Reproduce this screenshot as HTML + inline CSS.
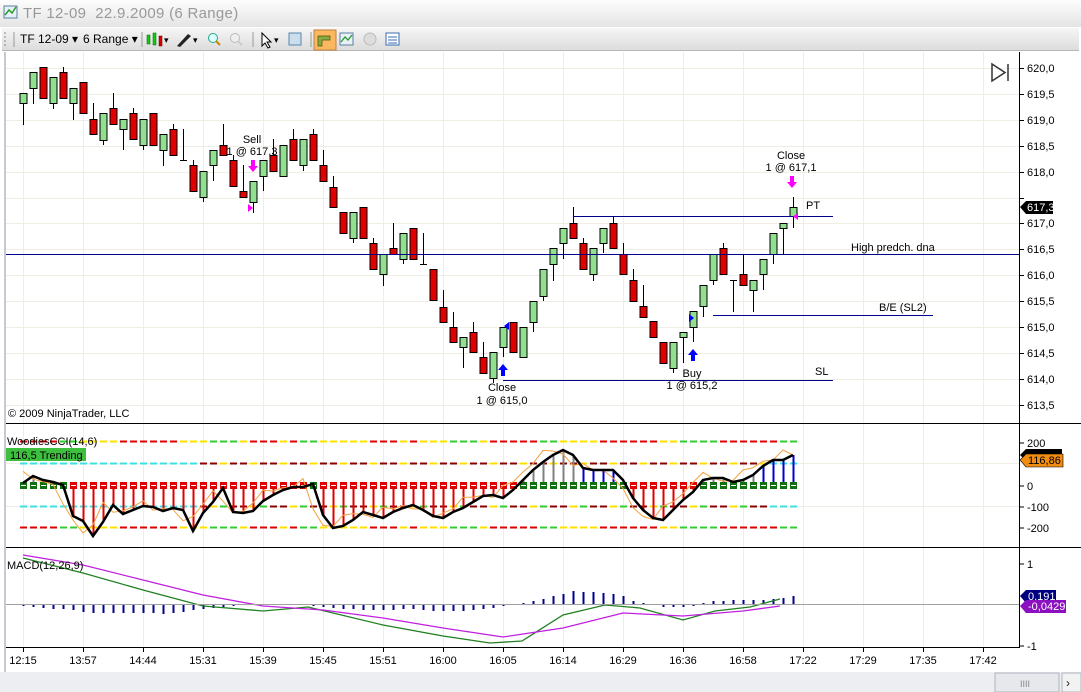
<!DOCTYPE html>
<html><head><meta charset="utf-8">
<style>
html,body{margin:0;padding:0;width:1081px;height:692px;overflow:hidden;background:#fff;font-family:"Liberation Sans",sans-serif;}
#title{position:absolute;left:0;top:0;width:1081px;height:27px;background:linear-gradient(#fdfdfd,#e4e4e4);}
#title span{position:absolute;left:23px;top:5px;font-size:15px;color:#999;letter-spacing:0.3px}
#tb{position:absolute;left:2px;top:28px;width:1077px;height:22px;background:linear-gradient(#f6f6f6,#dcdcdc);border-bottom:1px solid #b8b8b8;font-size:12px;color:#000}
#tb .t{position:absolute;top:4px}
svg{position:absolute;left:0;top:0}
</style></head><body>
<div id="title"><span>TF 12-09 &nbsp;22.9.2009 (6 Range)</span></div>
<div id="tb">
<span class="t" style="left:18px">TF 12-09 ▾</span>
<span class="t" style="left:81px">6 Range ▾</span>
</div>
<svg id="s" width="1081" height="692" xmlns="http://www.w3.org/2000/svg" font-family="Liberation Sans, sans-serif">
<rect x="4" y="6" width="13" height="12" fill="#e8f0f8" stroke="#5a7fa0"/>
<polyline points="5,15 9,10 12,13 16,7" fill="none" stroke="#2a9a2a" stroke-width="1.5"/>
<line x1="5" y1="32" x2="5" y2="47" stroke="#888" stroke-dasharray="2,2"/>
<line x1="14" y1="32" x2="14" y2="47" stroke="#999"/>
<line x1="142" y1="32" x2="142" y2="47" stroke="#999"/>
<rect x="147" y="35" width="3" height="9" fill="#1c1" stroke="#060" stroke-width=".5"/>
<rect x="153" y="33" width="3" height="12" fill="#1c1" stroke="#060" stroke-width=".5"/>
<rect x="159" y="36" width="3" height="10" fill="#d00" stroke="#600" stroke-width=".5"/>
<text x="164" y="43" font-size="9">▾</text>
<path d="M177 46 L188 34 L191 36 L180 47 Z" fill="#222"/>
<text x="193" y="43" font-size="9">▾</text>
<circle cx="213" cy="38" r="4.5" fill="#dff" stroke="#2a8"/><line x1="216" y1="41" x2="220" y2="45" stroke="#c80" stroke-width="2"/>
<circle cx="235" cy="38" r="4.5" fill="#eee" stroke="#bbb"/><line x1="238" y1="41" x2="242" y2="45" stroke="#ccc" stroke-width="2"/>
<line x1="253" y1="32" x2="253" y2="47" stroke="#999"/>
<path d="M262 33 L262 46 L265 43 L268 48 L270 47 L267 42 L271 42 Z" fill="#fff" stroke="#000"/>
<text x="274" y="43" font-size="9">▾</text>
<rect x="289" y="33" width="12" height="12" fill="#cde" stroke="#58a"/>
<line x1="311" y1="32" x2="311" y2="47" stroke="#999"/>
<rect x="314" y="30" width="22" height="20" fill="#fbb860" stroke="#c08040"/>
<path d="M318 36 h12 v4 h-8 v6 h-4z" fill="#8a4" stroke="#450" stroke-width=".7"/>
<rect x="340" y="33" width="13" height="12" fill="#e8f0f8" stroke="#5a7fa0"/>
<polyline points="341,42 345,37 348,40 352,35" fill="none" stroke="#2a9a2a" stroke-width="1.3"/>
<circle cx="370" cy="39" r="6" fill="#ddd" stroke="#bbb"/>
<rect x="386" y="33" width="13" height="12" fill="#fff" stroke="#3a6ab0"/>
<line x1="388" y1="37" x2="397" y2="37" stroke="#3a6ab0"/><line x1="388" y1="40" x2="397" y2="40" stroke="#3a6ab0"/><line x1="388" y1="43" x2="397" y2="43" stroke="#3a6ab0"/>
<rect x="0" y="52" width="1081" height="620" fill="#fff"/>
<line x1="5" y1="52" x2="5" y2="672" stroke="#c8c8d0" stroke-width="2"/>
<g id="grid" stroke="#eeeee4" stroke-width="1"></g>
<g id="main"></g>
<line x1="6" y1="423.5" x2="1081" y2="423.5" stroke="#000"/>
<line x1="6" y1="547.5" x2="1081" y2="547.5" stroke="#000"/>
<line x1="1019.5" y1="52" x2="1019.5" y2="647" stroke="#000"/>
<line x1="6" y1="647.5" x2="1020" y2="647.5" stroke="#000"/>
<path d="M992 64 L992 81 L1005 72.5 Z" fill="none" stroke="#333" stroke-width="1.5"/>
<line x1="1008" y1="64" x2="1008" y2="81" stroke="#333" stroke-width="1.5"/>
<line x1="6" y1="254.5" x2="1019" y2="254.5" stroke="#00008b"/>
<line x1="573" y1="216.5" x2="833" y2="216.5" stroke="#00008b"/>
<line x1="713" y1="315.5" x2="933" y2="315.5" stroke="#00008b"/>
<line x1="503" y1="380.5" x2="833" y2="380.5" stroke="#00008b"/>
<g font-size="11" fill="#000">
<text x="851" y="251">High predch. dna</text>
<text x="879" y="311">B/E (SL2)</text>
<text x="815" y="375">SL</text>
<text x="806" y="209">PT</text>
<text x="252" y="143" text-anchor="middle">Sell</text>
<text x="252" y="155" text-anchor="middle">1 @ 617,3</text>
<text x="791" y="159" text-anchor="middle">Close</text>
<text x="791" y="171" text-anchor="middle">1 @ 617,1</text>
<text x="502" y="391" text-anchor="middle">Close</text>
<text x="502" y="404" text-anchor="middle">1 @ 615,0</text>
<text x="692" y="377" text-anchor="middle">Buy</text>
<text x="692" y="389" text-anchor="middle">1 @ 615,2</text>
<text x="8" y="417">© 2009 NinjaTrader, LLC</text>
</g>
<g fill="#f0f">
<path d="M251 160 h4 v6 h3 l-5 6 l-5 -6 h3z"/><path d="M790 176 h4 v6 h3 l-5 6 l-5 -6 h3z"/>
<path d="M248 204 l5 4 l-5 4z"/><path d="M798 213 l-5 3.5 l5 3.5z"/>
</g>
<g fill="#00f">
<path d="M501 376 h4 v-6 h3 l-5 -6 l-5 6 h3z"/><path d="M691 361 h4 v-6 h3 l-5 -6 l-5 6 h3z"/>
<path d="M509 322 l-5 4 l5 4z"/><path d="M689 314 l5 4 l-5 4z"/>
</g>
<g id="pax" font-size="11"></g>
<path d="M1020 207 l6 -6 h27 v13 h-27z" fill="#000"/>
<text x="1027" y="211" font-size="11" fill="#fff">617,3</text>
<text x="7" y="445" font-size="11">WoodiesCCI(14,6)</text>
<rect x="6" y="448" width="80" height="13" fill="#3ec03e"/>
<text x="10" y="459" font-size="11">116,5 Trending</text>
<g font-size="11">
<line x1="1019" y1="443" x2="1024" y2="443" stroke="#000"/><text x="1027" y="447">200</text>
<line x1="1019" y1="486" x2="1024" y2="486" stroke="#000"/><text x="1027" y="490">0</text>
<line x1="1019" y1="507" x2="1024" y2="507" stroke="#000"/><text x="1027" y="511">-100</text>
<line x1="1019" y1="528" x2="1024" y2="528" stroke="#000"/><text x="1027" y="532">-200</text>
</g>
<path d="M1020 455 l6 -6 h36 v12 h-36z" fill="#000"/>
<path d="M1020 460 l6 -6 h37 v13 h-37z" fill="#f08c10" stroke="#000" stroke-width=".6"/>
<text x="1028" y="464" font-size="11">116,86</text>
<text x="7" y="569" font-size="11">MACD(12,26,9)</text>
<line x1="6" y1="604.5" x2="1019" y2="604.5" stroke="#a0a0a0"/>
<g font-size="11">
<line x1="1019" y1="564" x2="1024" y2="564" stroke="#000"/><text x="1027" y="568">1</text>
<line x1="1019" y1="646" x2="1024" y2="646" stroke="#000"/><text x="1027" y="650">-1</text>
</g>
<path d="M1020 596 l6 -6 h30 v13 h-30z" fill="#000080"/>
<text x="1028" y="600" font-size="11" fill="#fff">0,191</text>
<path d="M1020 606 l6 -6 h40 v13 h-40z" fill="#8a10c0"/>
<text x="1028" y="610" font-size="11" fill="#fff">-0,0429</text>
<g id="time" font-size="11"></g>
<rect x="0" y="672" width="1081" height="20" fill="#eceef2"/>
<rect x="995" y="673" width="64" height="19" fill="#e6e8ec" stroke="#b0b4bc"/>
<text x="1020" y="687" font-size="9" fill="#888">IIII</text>
<rect x="1062" y="673" width="19" height="19" fill="#f2f2f2" stroke="#b0b4bc"/>
<text x="1066" y="687" font-size="12" fill="#222">›</text>
</svg>
<script>
var NS="http://www.w3.org/2000/svg";
function el(p,t,a,txt){var e=document.createElementNS(NS,t);for(var k in a)e.setAttribute(k,a[k]);if(txt)e.textContent=txt;p.appendChild(e);return e;}
var grid=document.getElementById('grid'),main=document.getElementById('main'),pax=document.getElementById('pax'),tm=document.getElementById('time');
var xs=[23,83,143,203,263,323,383,443,503,563,623,683,743,803,863,923,983];
var tl=["12:15","13:57","14:44","15:31","15:39","15:45","15:51","16:00","16:05","16:14","16:29","16:36","16:58","17:22","17:29","17:35","17:42"];
xs.forEach(function(x,i){el(grid,'line',{x1:x+.5,y1:52,x2:x+.5,y2:647});
 el(tm,'line',{x1:x+.5,y1:647,x2:x+.5,y2:652,stroke:'#000'});
 el(tm,'text',{x:x,y:664,'text-anchor':'middle'},tl[i]);});
var pl=["620,0","619,5","619,0","618,5","618,0","617,5","617,0","616,5","616,0","615,5","615,0","614,5","614,0","613,5"];
for(var i=0;i<14;i++){var y=Math.round(68+i*25.9);el(grid,'line',{x1:6,y1:y+.5,x2:1019,y2:y+.5});
 el(pax,'line',{x1:1019,y1:y+.5,x2:1024,y2:y+.5,stroke:'#000'});
 if(i!=5)el(pax,'text',{x:1027,y:y+4},pl[i]);}
[463,506].forEach(function(y){el(grid,'line',{x1:6,y1:y+.5,x2:1019,y2:y+.5});});
var C=[[23,93,103,93,125,'g'],[33,72,88,72,104,'g'],[43,67,98,67,98,'r'],[53,77,103,77,109,'g'],[63,72,98,67,98,'r'],[73,88,103,88,120,'g'],[83,82,113,82,113,'r'],[93,119,134,103,134,'r'],[103,113,140,113,145,'g'],[113,108,124,93,124,'r'],[123,119,129,119,150,'g'],[133,113,139,108,139,'r'],[143,119,145,119,150,'g'],[153,113,145,113,145,'r'],[163,134,150,134,166,'g'],[173,129,155,124,155,'r'],[183,160,160,129,160,'d'],[193,165,191,160,191,'r'],[203,171,197,171,202,'g'],[213,150,165,150,181,'g'],[223,145,155,124,155,'r'],[233,160,186,155,186,'r'],[243,191,197,165,197,'r'],[253,181,202,181,213,'g'],[263,160,176,160,191,'g'],[273,155,171,139,171,'r'],[283,145,176,145,176,'g'],[293,139,160,129,160,'r'],[303,139,165,139,171,'g'],[313,134,160,129,160,'r'],[323,165,181,150,181,'r'],[333,187,207,176,207,'r'],[343,212,233,212,233,'r'],[353,212,238,212,243,'g'],[363,207,238,207,238,'r'],[373,243,269,238,269,'r'],[383,254,274,254,286,'g'],[393,248,254,223,254,'r'],[403,233,259,233,264,'g'],[413,228,259,228,259,'r'],[423,264,264,233,264,'d'],[433,269,300,269,300,'r'],[443,307,322,290,322,'r'],[453,327,342,312,342,'r'],[463,337,347,337,368,'g'],[473,332,352,322,352,'r'],[483,357,373,342,373,'r'],[493,352,378,352,383,'g'],[503,327,347,327,357,'g'],[513,322,352,322,352,'r'],[523,327,357,327,357,'g'],[533,301,322,301,332,'g'],[543,269,296,269,301,'g'],[553,248,264,248,281,'g'],[563,228,243,228,259,'g'],[573,223,238,207,238,'r'],[583,243,269,238,269,'r'],[593,248,274,248,281,'g'],[603,228,243,228,253,'g'],[613,223,248,217,248,'r'],[623,254,274,243,274,'r'],[633,280,301,269,301,'r'],[643,306,317,285,317,'r'],[653,321,337,321,337,'r'],[663,342,363,342,363,'r'],[673,342,368,342,373,'g'],[683,332,337,332,363,'g'],[693,311,327,311,342,'g'],[703,285,306,285,317,'g'],[713,254,280,254,285,'g'],[723,248,274,243,274,'r'],[733,280,280,280,312,'d'],[743,274,285,254,285,'r'],[753,280,290,280,312,'g'],[763,259,274,259,290,'g'],[773,233,254,233,264,'g'],[783,223,228,223,254,'g'],[793,207,216,197,228,'g']];
C.forEach(function(c){el(main,'line',{x1:c[0]+.5,y1:c[3],x2:c[0]+.5,y2:c[4],stroke:'#000'});
 if(c[5]=='d'){el(main,'line',{x1:c[0]-3,y1:c[1]+.5,x2:c[0]+4,y2:c[1]+.5,stroke:'#000'});}
 else el(main,'rect',{x:c[0]-3,y:c[1]+.5,width:7,height:Math.max(c[2]-c[1],3),fill:c[5]=='g'?'#90e090':'#e00000',stroke:'#000','stroke-width':1});});
// CCI
var cy=[483,476,480,482,485,516,521,536,522,505,514,510,506,507,511,508,510,531,513,502,488,512,513,511,501,495,490,487,487,484,515,528,526,520,512,515,518,512,508,505,510,516,518,512,508,502,496,495,498,490,480,470,462,455,450,455,468,470,470,470,480,498,510,518,520,510,500,492,480,478,478,482,480,475,466,460,460,455];
var dl=[[441,'#d00','#ffe000','#3c3'],[527,'#d00','#ffe000','#3c3']];
dl.forEach(function(d){for(var x=20;x<797;x+=10){var c=(x%120<60)?d[1]:((x%80<40)?d[2]:d[3]);if(x<520&&x>180&&x%40==0)c=d[2];el(main,'line',{x1:x,y1:d[0]+.5,x2:x+7,y2:d[0]+.5,stroke:c,'stroke-width':2});}});
for(var x=20;x<797;x+=10){var c=(x<200||x>760)?'#40e0e0':(x%30==0?'#8b0000':(x%30==10?'#ffe000':'#8b0000'));el(main,'line',{x1:x,y1:463.5,x2:x+7,y2:463.5,stroke:c,'stroke-width':2});
 var c2=(x<200||x>760)?'#40e0e0':(x%40==0?'#8b0000':(x%40==10?'#ffe000':(x%40==20?'#3c3':'#8b0000')));el(main,'line',{x1:x,y1:506.5,x2:x+7,y2:506.5,stroke:c2,'stroke-width':2});}
var pts="",opts="";
cy.forEach(function(y,i){var x=23+i*10;var col=y>485?'#e00000':((x>=583&&x<=613)||x>=763?'#0000d0':'#808080');
 el(main,'line',{x1:x+.5,y1:485,x2:x+.5,y2:y,stroke:col,'stroke-width':2});
 pts+=x+","+y+" ";var nx=cy[Math.min(i+1,cy.length-1)];var oy=y+(nx-y)*0.8+(i%4==0?-6:0);opts+=x+","+oy+" ";});
cy.forEach(function(y,i){var x=23+i*10;el(main,'rect',{x:x-3,y:482,width:7,height:7,fill:y>485?'#e00000':'#107010'});
 el(main,'line',{x1:x-2,y1:485.5,x2:x+3,y2:485.5,stroke:'#fff'});});
el(main,'polyline',{points:opts,fill:'none',stroke:'#f5a040','stroke-width':1});
el(main,'polyline',{points:pts,fill:'none',stroke:'#000','stroke-width':2.5});
// MACD
var H=[2,3,4,5,5,6,8,9,9,9,9,9,9,9,10,9,8,6,5,4,3,2,1,0,0,0,0,1,1,2,3,4,5,5,6,6,6,6,5,5,6,7,7,7,7,6,5,4,2,0,-1,-3,-5,-8,-10,-13,-12,-12,-11,-10,-8,-3,-1,1,3,3,3,2,-1,-3,-3,-4,-4,-4,-4,-5,-6,-8];
H.forEach(function(h,i){var x=23+i*10;if(h==0)return;el(main,'line',{x1:x+.5,y1:604,x2:x+.5,y2:604+h,stroke:'#000090','stroke-width':2});});
el(main,'polyline',{points:"23,558 83,573 143,590 203,606 263,611 308,607 383,625 443,636 490,643 522,641 563,615 605,605 640,608 683,620 715,611 750,607 780,599",fill:'none',stroke:'#208020','stroke-width':1.3});
el(main,'polyline',{points:"23,555 83,565 143,580 203,595 263,606 323,610 383,618 443,628 503,637 563,628 623,613 683,616 743,611 780,606",fill:'none',stroke:'#c020e0','stroke-width':1.3});
</script>
</body></html>
